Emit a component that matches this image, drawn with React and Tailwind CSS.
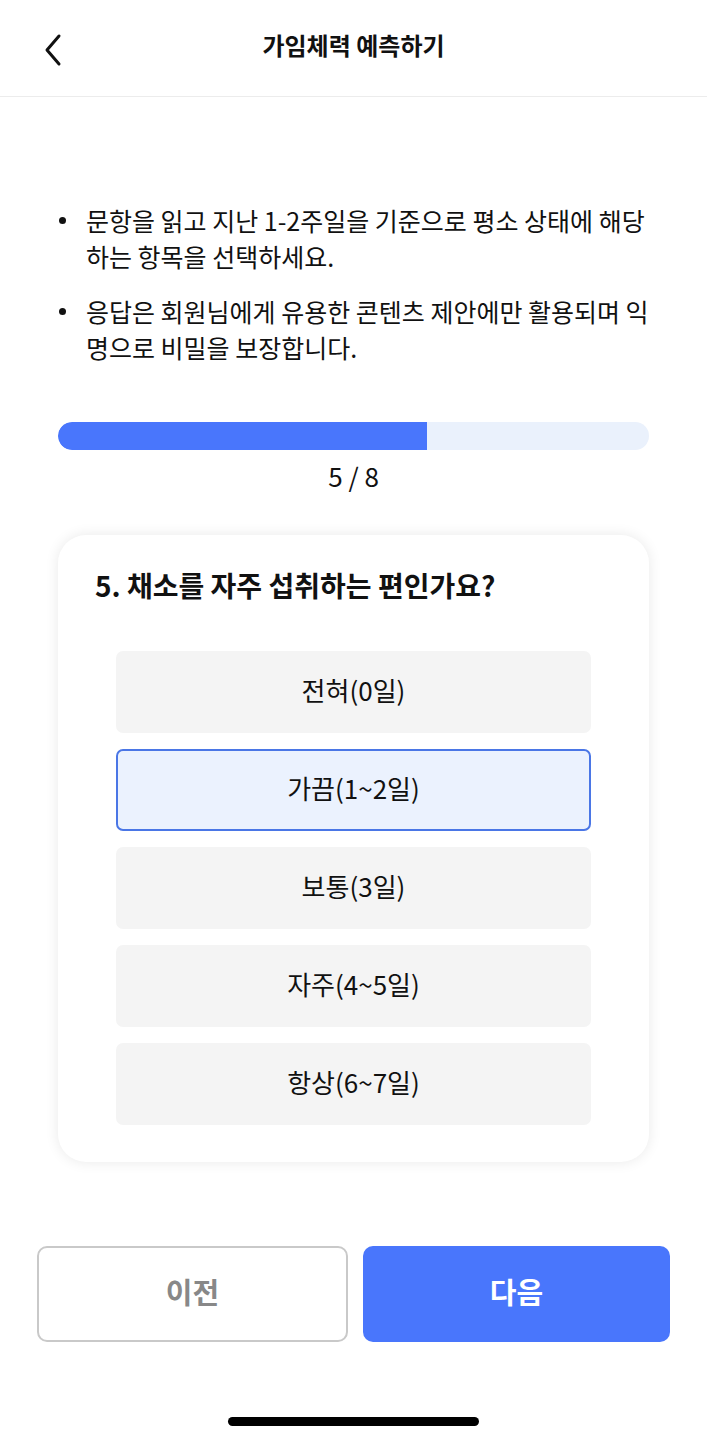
const options = ['전혀(0일)', '가끔(1~2일)', '보통(3일)', '자주(4~5일)', '항상(6~7일)'];

const notices = [
    ['문항을 읽고 지난 1-2주일을 기준으로 평소 상태에 해당', '하는 항목을 선택하세요.'],
    ['응답은 회원님에게 유용한 콘텐츠 제안에만 활용되며 익', '명으로 비밀을 보장합니다.'],
];

function Header() {
    return (
        <div className="relative h-[97px] border-b border-[#ececec] flex items-center justify-center">
            {/* Back button */}
            <button className="absolute left-[38px] top-[29px] p-1">
                <svg width="22" height="34" viewBox="0 0 22 34" fill="none">
                    <path d="M17 3 L5 17 L17 31" stroke="#111" strokeWidth="3" strokeLinecap="round" strokeLinejoin="round" />
                </svg>
            </button>
            <h1 className="text-[24px] font-semibold text-[#111] leading-none -mt-[6px]">가임체력 예측하기</h1>
        </div>
    );
}

function Progress({ current, total }) {
    return (
        <div className="mx-[58px] mt-[57px]">
            <div className="h-[28px] rounded-full bg-[#eaf1fc] overflow-hidden">
                <div className="h-full w-[369px] bg-[#4976fc] rounded-l-full" />
            </div>
            <p className="mt-[10px] text-center text-[26px] leading-[32px] text-[#111]">
                {current} / {total}
            </p>
        </div>
    );
}

export default function App() {
    const selected = 1;

    return (
        <div
            className="w-[707px] h-[1440px] bg-white flex flex-col"
            style={{ fontFamily: '"Noto Sans CJK KR", "Noto Sans", sans-serif' }}
        >
            <Header />

            {/* Notices */}
            <ul className="pt-[105px] pl-[58px] pr-[30px] flex flex-col gap-[19px]">
                {notices.map((lines) => (
                    <li key={lines[0]} className="flex text-[25px] leading-[36px] text-[#111]">
                        <span className="w-[28px] shrink-0 flex pt-[15px]">
                            <span className="w-[7px] h-[7px] rounded-full bg-[#111] ml-[1px]" />
                        </span>
                        <span className="whitespace-nowrap">
                            {lines[0]}
                            <br />
                            {lines[1]}
                        </span>
                    </li>
                ))}
            </ul>

            <Progress current={5} total={8} />

            {/* Question card */}
            <div className="mx-[58px] mt-[43px] rounded-[28px] bg-white shadow-[0_0_14px_rgba(0,0,0,0.09)] pt-[30px] pb-[37px]">
                <h2 className="px-[37px] text-[28px] font-semibold leading-[40px] text-[#111]">
                    5. 채소를 자주 섭취하는 편인가요?
                </h2>
                <div className="mt-[46px] mx-[58px] flex flex-col gap-[16px]">
                    {options.map((o, i) => (
                        <button
                            key={o}
                            className={`h-[82px] pb-[5px] rounded-[7px] text-[26px] text-[#111] flex items-center justify-center ${
                                i === selected
                                    ? 'bg-[#ebf2fe] border-2 border-[#4a76e6]'
                                    : 'bg-[#f4f4f4]'
                            }`}
                        >
                            {o}
                        </button>
                    ))}
                </div>
            </div>

            {/* Bottom actions */}
            <div className="mt-[84px] px-[37px] flex gap-[15px]">
                <button className="flex-1 h-[96px] pb-[5px] rounded-[10px] border-2 border-[#c9c9c9] bg-white text-[29px] font-bold text-[#888]">
                    이전
                </button>
                <button className="flex-1 h-[96px] pb-[5px] rounded-[10px] bg-[#4976fc] text-[29px] font-bold text-white">
                    다음
                </button>
            </div>

            {/* Home indicator */}
            <div className="mt-[75px] flex justify-center">
                <div className="w-[251px] h-[9px] rounded-full bg-black" />
            </div>
        </div>
    );
}
